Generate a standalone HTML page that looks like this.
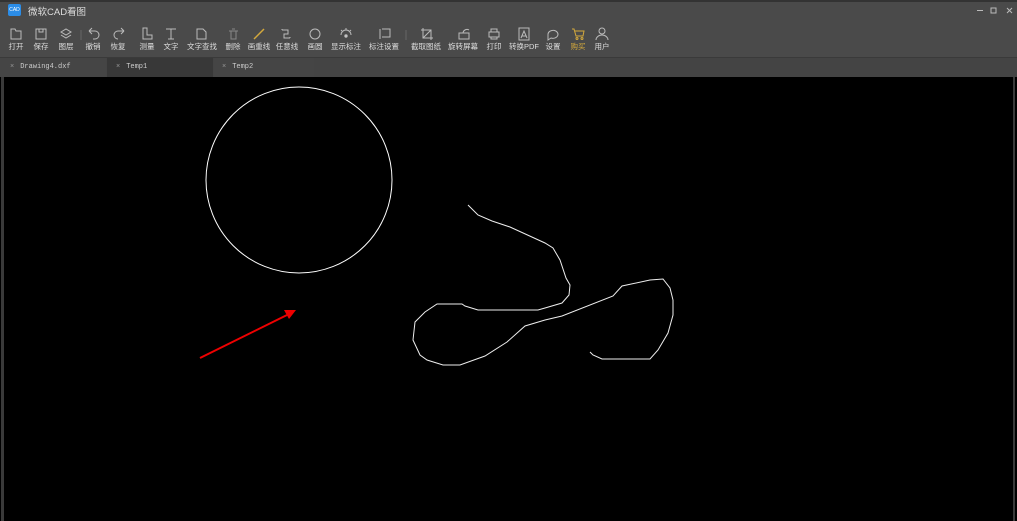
<!DOCTYPE html>
<html><head><meta charset="utf-8"><style>
*{margin:0;padding:0;box-sizing:border-box}
body{width:1017px;height:521px;overflow:hidden;background:#4a4a4a;font-family:"Liberation Sans","Noto Sans CJK SC",sans-serif;position:relative}
.t{position:absolute;font-size:7.5px;color:#ddd;white-space:nowrap;transform:translateX(-50%);top:41px}
.ic{position:absolute;top:27px}
.tab{position:absolute;top:58px;height:19px;font-size:7px;color:#ccc;font-family:"Liberation Mono",monospace;line-height:19px}
</style></head><body>
<div style="position:absolute;left:0;top:0;width:1017px;height:2px;background:#333"></div>
<div style="position:absolute;left:8px;top:4px;width:13px;height:12px;background:#2b8de8;border-radius:2px;color:#fff;font-size:5px;line-height:12px;text-align:center">CAD</div>
<div style="position:absolute;left:28px;top:4px;font-size:9.5px;color:#ddd">微软CAD看图</div>
<svg style="position:absolute;left:975px;top:6px" width="40" height="10" stroke="#bbb" fill="none" stroke-width="1"><path d="M2 4.5h6"/><rect x="16" y="2" width="5" height="5"/><path d="M32 2l5 5M37 2l-5 5"/></svg>
<svg style="position:absolute;left:0;top:26px" width="620" height="16" fill="none" stroke="#bbb" stroke-width="1">
<path d="M11 3h4l1 2h5v8h-10z"/><rect x="36" y="3" width="10" height="10"/><path d="M39 3v3h4V3"/>
<path d="M61 6l5-3 5 3-5 3zM61 9l5 3 5-3"/><path d="M81 4v10" stroke="#666"/>
<path d="M89 5h6a4 4 0 0 1 0 8h-2M89 5l3-3M89 5l3 3"/><path d="M124 5h-6a4 4 0 0 0 0 8M124 5l-3-3M124 5l-3 3"/>
<path d="M143 2v11h9v-4h-5V2z"/><path d="M166 3h10M171 3v10M168 13h6"/>
<path d="M197 3h6l3 3v7h-9z"/><path d="M229 5h9M231 5v8h5V5M232 3h3" stroke="#888"/>
<path d="M254 13l10-10" stroke="#d4a93c" stroke-width="1.5"/><path d="M282 4h6v4h-4v4h6M282 4v-1M290 12v-1"/>
<circle cx="315" cy="8" r="5"/><path d="M341 9a5 5 0 0 1 10 0M346 4v-2M342 5l-1-1M350 5l1-1"/><circle cx="346" cy="10" r="1.2" fill="#ccc"/>
<path d="M380 3v10M382 3h8v8h-8"/><path d="M406 4v10" stroke="#666"/>
<path d="M423 2v10h10M421 4h10v10M423 12l8-8"/><path d="M459 13h10v-6h-10zM463 7a4 4 0 0 1 6-3"/>
<path d="M489 6h10v5h-10zM491 6V3h6v3M491 11v2h6v-2"/><rect x="519" y="2" width="10" height="12"/><path d="M521 12l3-7 3 7M522 10h4"/>
<path d="M548 8a5 4 0 1 1 3 4l-3 2z"/><path d="M572 3h2l2 7h7l1-5h-9" stroke="#d4a93c"/><circle cx="577" cy="12.5" r="1" stroke="#d4a93c"/><circle cx="582" cy="12.5" r="1" stroke="#d4a93c"/>
<circle cx="602" cy="5" r="3"/><path d="M596 14a6 5 0 0 1 12 0"/>
</svg>
<div class="t" style="left:16px">打开</div><div class="t" style="left:41px">保存</div><div class="t" style="left:66px">图层</div>
<div class="t" style="left:93px">撤销</div><div class="t" style="left:118px">恢复</div><div class="t" style="left:147px">测量</div>
<div class="t" style="left:171px">文字</div><div class="t" style="left:202px">文字查找</div><div class="t" style="left:233px">删除</div>
<div class="t" style="left:259px">画重线</div><div class="t" style="left:287px">任意线</div><div class="t" style="left:315px">画圆</div>
<div class="t" style="left:346px">显示标注</div><div class="t" style="left:384px">标注设置</div><div class="t" style="left:426px">截取图纸</div>
<div class="t" style="left:463px">旋转屏幕</div><div class="t" style="left:494px">打印</div><div class="t" style="left:524px">转换PDF</div>
<div class="t" style="left:553px">设置</div><div class="t" style="left:578px;color:#d4a93c">购买</div><div class="t" style="left:602px">用户</div>
<div style="position:absolute;left:0;top:57px;width:1017px;height:1px;background:#3a3a3a"></div>
<div style="position:absolute;left:0;top:58px;width:1017px;height:19px;background:#444"></div>
<div class="tab" style="left:0;width:106px;background:#454545"><span style="margin-left:10px;color:#999">×</span><span style="margin-left:6px">Drawing4.dxf</span></div>
<div class="tab" style="left:107px;width:106px;background:#383838"><span style="margin-left:9px;color:#999">×</span><span style="margin-left:6px">Temp1</span></div>
<div class="tab" style="left:214px;width:100px;background:#454545"><span style="margin-left:8px;color:#999">×</span><span style="margin-left:6px">Temp2</span></div>
<div style="position:absolute;left:0;top:77px;width:1017px;height:444px;background:#000"></div>
<div style="position:absolute;left:1px;top:77px;width:3px;height:444px;background:#3a3a3a"></div>
<div style="position:absolute;left:1013px;top:77px;width:2px;height:444px;background:#3a3a3a"></div>
<svg style="position:absolute;left:0;top:0" width="1017" height="521" fill="none">
<circle cx="299" cy="180" r="93" stroke="#fff" stroke-width="1"/>
<path d="M468 205L478 215L492 221L510 227L545 243L553 248L560 260L566 278L570 285L569 295L562 303L545 308L538 310L478 310L465 306L462 304L437 304L425 312L415 322L413 340L420 355L427 360L443 365L460 365L485 356L507 342L525 326L545 320L562 316L613 296L622 286L650 280L663 279L670 288L673 300L673 315L668 333L658 350L650 359L602 359L593 355L590 352" stroke="#eee" stroke-width="1"/>
<path d="M200 358L287 315" stroke="#e00" stroke-width="2"/>
<path d="M296 310L284 310L289 319z" fill="#e00"/>
</svg>
</body></html>
